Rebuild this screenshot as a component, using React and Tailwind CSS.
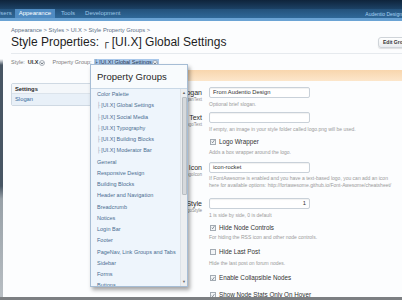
const groups = [
  { name: "Color Palette" },
  { name: "[UI.X] Global Settings", sub: true },
  { name: "[UI.X] Social Media", sub: true },
  { name: "[UI.X] Typography", sub: true },
  { name: "[UI.X] Building Blocks", sub: true },
  { name: "[UI.X] Moderator Bar", sub: true },
  { name: "General" },
  { name: "Responsive Design" },
  { name: "Building Blocks" },
  { name: "Header and Navigation" },
  { name: "Breadcrumb" },
  { name: "Notices" },
  { name: "Login Bar" },
  { name: "Footer" },
  { name: "PageNav, Link Groups and Tabs" },
  { name: "Sidebar" },
  { name: "Forms" },
  { name: "Buttons" },
];

function DropIcon() {
  return (
    <svg width="6" height="6" viewBox="0 0 12 12" className="inline-block">
      <circle cx="6" cy="6" r="5" fill="#f4f6f8" stroke="#7a8794" strokeWidth="1.2" />
      <path d="M3.5 5 L6 7.8 L8.5 5" fill="none" stroke="#3a4652" strokeWidth="1.6" />
    </svg>
  );
}

function Checkbox({ checked }) {
  return (
    <span className="ml-[1px] flex h-[6px] w-[6px] items-center justify-center border border-[#a3abb3] bg-[#f3f5f7]">
      {checked && (
        <svg width="5" height="5" viewBox="0 0 10 10">
          <path d="M1.5 5.5 L4 8 L8.5 1.5" fill="none" stroke="#3a4652" strokeWidth="1.4" />
        </svg>
      )}
    </span>
  );
}

function Field({ label, sub, children, className }) {
  return (
    <div className={"flex " + (className || "")}>
      <div className="mt-[2px] w-[101px] shrink-0 text-right">
        <div className="text-[7px] leading-[8px] text-[#2a2a2a]">{label}</div>
        <div className="text-[4.5px] leading-[5px] text-[#8a8a8a]">{sub}</div>
      </div>
      <div className="ml-[7px] min-w-0 flex-1">{children}</div>
    </div>
  );
}

function Input({ value, right }) {
  return (
    <div
      className={
        "flex h-[11px] w-[101px] items-center rounded-[2px] border border-[#c9d1d9] bg-white px-[3px] text-[5.8px] text-[#333] shadow-[inset_0_1px_1px_rgba(0,0,0,0.06)] " +
        (right ? "justify-end" : "")
      }
    >
      {value}
    </div>
  );
}

function Hint({ children, className }) {
  return (
    <div className={"whitespace-nowrap text-[5px] leading-[7px] text-[#9a9a9a] " + (className || "")}>
      {children}
    </div>
  );
}

function CheckRow({ label, checked, className }) {
  return (
    <div className={"ml-[108px] flex h-[9px] items-center gap-[3px] " + (className || "")}>
      <Checkbox checked={checked} />
      <span className="whitespace-nowrap text-[6.3px] text-[#333]">{label}</span>
    </div>
  );
}

export default function App() {
  return (
    <div className="relative flex h-[300px] w-[402px] flex-col overflow-hidden bg-[#fcfdfe] font-['Liberation_Sans',Arial,sans-serif] text-[#333]">
      <div className="h-[9px] shrink-0 bg-gradient-to-b from-[#0f243b] to-[#1c4266]" />
      <div className="flex h-[9px] shrink-0 items-stretch bg-gradient-to-b from-[#24527b] to-[#2f6899] text-[6px] leading-[9px] text-[#9cc6e6]">
        <span className="-ml-[4px]">Users</span>
        <span className="ml-[3px] bg-[#4f8bc2] px-[4px] text-white">Appearance</span>
        <span className="ml-[6px]">Tools</span>
        <span className="ml-[10px]">Development</span>
        <span className="ml-auto mt-[1px] whitespace-nowrap text-[5px] text-[#a6d2f2]">Audentio Design</span>
      </div>
      <div className="h-[3px] shrink-0 bg-[#6aa3d4]" />

      <div className="flex min-h-0 flex-1">
        <div className="w-[3px] shrink-0 bg-[linear-gradient(to_bottom,#fcfdfe_0px,#fcfdfe_38px,#485664_44px,#485664_165px,#98a1a8_178px,#b8bec3_276px)]" />
        <div className="min-w-0 flex-1 pl-[8px]">
          <div className="mt-[6px] whitespace-nowrap text-[5.75px] leading-[6px] text-[#5b6f85]">
            Appearance &gt; Styles &gt; UI.X &gt; Style Property Groups &gt;
          </div>
          <div className="mt-[2px] flex items-start justify-between border-b border-[#e6eaee] pb-[3px]">
            <h1 className="whitespace-nowrap text-[12px] leading-[14px] text-[#1e1e1e]">
              Style Properties: <span className="font-['DejaVu_Sans',sans-serif] text-[10px]">┌</span> [UI.X] Global Settings
            </h1>
            <div className="-mr-[8px] mt-[2px] flex h-[11px] w-[32px] shrink-0 items-center overflow-hidden whitespace-nowrap rounded-[3px] border border-[#cfd4d9] bg-gradient-to-b from-white to-[#e9ecef] pl-[4px] text-[5px] font-bold text-[#333] shadow-[0_1px_1px_rgba(0,0,0,0.12)]">
              Edit Group
            </div>
          </div>
          <div className="mt-[5px] flex h-[7px] items-center whitespace-nowrap text-[5.5px] text-[#7a7a7a]">
            <span>Style:</span>
            <span className="ml-[3px] font-bold text-[#333]">UI.X</span>
            <span className="ml-[1px] flex"><DropIcon /></span>
            <span className="ml-[7px]">Property Group:</span>
            <span className="ml-[2px] flex h-[7px] w-[65px] items-center bg-[#a9c8ea] pl-[1px] text-[#1f3550]">
              <span className="font-['DejaVu_Sans',sans-serif] text-[5px]">├</span>&nbsp;[UI.X] Global Settings
              <span className="ml-auto mr-[1px] flex"><DropIcon /></span>
            </span>
          </div>

          <div className="mt-[4px] flex">
            <div className="w-[88px] shrink-0">
              <div className="mt-[13px] w-[86px] overflow-hidden rounded-[2px] border border-[#cfd9e3]">
                <div className="h-[10px] border-b border-[#dbe3eb] bg-[#f4f7fa] pl-[3px] text-[5.8px] font-bold leading-[10px] text-[#2a2a2a]">
                  Settings
                </div>
                <div className="h-[11px] bg-[#e8f0f8] pl-[3px] text-[5.8px] leading-[11px] text-[#3b6b9c]">Slogan</div>
              </div>
            </div>

            <div className="ml-[2px] min-w-0 flex-1">
              <div className="h-[11px] bg-gradient-to-b from-[#f8d6ad] to-[#fce6cb]" />

              <Field label="Slogan" sub="uix_sloganText" className="mt-[6px]">
                <Input value="From Audentio Design" />
                <Hint className="mt-[3px]">Optional brief slogan.</Hint>
              </Field>

              <Field label="Logo Text" sub="uix_logoText" className="mt-[4px]">
                <Input value="" />
                <Hint className="mt-[3px]">If empty, an image in your style folder called logo.png will be used.</Hint>
              </Field>

              <CheckRow label="Logo Wrapper" checked className="mt-[4px]" />
              <div className="ml-[108px]">
                <Hint className="mt-[3px]">Adds a box wrapper around the logo.</Hint>
              </div>

              <Field label="Logo Icon" sub="uix_logoIcon" className="mt-[6px]">
                <Input value="icon-rocket" />
                <Hint className="mt-[2px]">If FontAwesome is enabled and you have a text-based logo, you can add an icon</Hint>
                <Hint>here for available options: http://fortawesome.github.io/Font-Awesome/cheatsheet/</Hint>
              </Field>

              <Field label="Logo Style" sub="uix_logoStyle" className="mt-[9px]">
                <Input value="1" right />
                <Hint className="mt-[3px]">1 is side by side, 0 is default</Hint>
              </Field>

              <CheckRow label="Hide Node Controls" checked className="mt-[4px]" />
              <div className="ml-[108px]">
                <Hint className="mt-[1.5px]">For hiding the RSS icon and other node controls.</Hint>
              </div>

              <CheckRow label="Hide Last Post" className="mt-[7px]" />
              <div className="ml-[108px]">
                <Hint className="mt-[3px]">Hide the last post on forum nodes.</Hint>
              </div>

              <CheckRow label="Enable Collapsible Nodes" checked className="mt-[7px]" />
              <CheckRow label="Show Node Stats Only On Hover" checked className="mt-[8px]" />
            </div>
          </div>
        </div>
      </div>

      <div className="h-[3px] shrink-0 bg-[#7c7f82]" />

      <div className="absolute left-[90px] top-[64px] flex h-[223px] w-[98px] flex-col overflow-hidden border border-[#a6bdd5] bg-[#eef5fc] shadow-[2px_3px_4px_rgba(0,0,0,0.35)]">
        <div className="h-[24px] shrink-0 border-b border-[#c9d8e6] bg-[#f8fbfd] pl-[6px] text-[9.5px] leading-[24px] text-[#262626]">
          Property Groups
        </div>
        <div className="flex min-h-0 flex-1">
          <div className="min-w-0 flex-1 overflow-hidden pl-[6px]">
            {groups.map((g) => (
              <div key={g.name} className="h-[11.25px] whitespace-nowrap text-[5.5px] leading-[11.25px] text-[#4a6d91]">
                {g.sub && <span className="mr-[1px] font-['DejaVu_Sans',sans-serif] text-[#8ea4ba]">├</span>}
                {g.name}
              </div>
            ))}
          </div>
          <div className="flex w-[7px] shrink-0 flex-col items-center border-l border-[#dde2e7] bg-[#eceef0]">
            <div className="h-[8px] text-[4px] leading-[8px] text-[#666]">▲</div>
            <div className="h-[98px] w-[5px] rounded-[1px] border border-[#b9bec3] bg-[#d6d9dc]" />
            <div className="mt-auto h-[8px] text-[4px] leading-[8px] text-[#666]">▼</div>
          </div>
        </div>
      </div>
    </div>
  );
}
